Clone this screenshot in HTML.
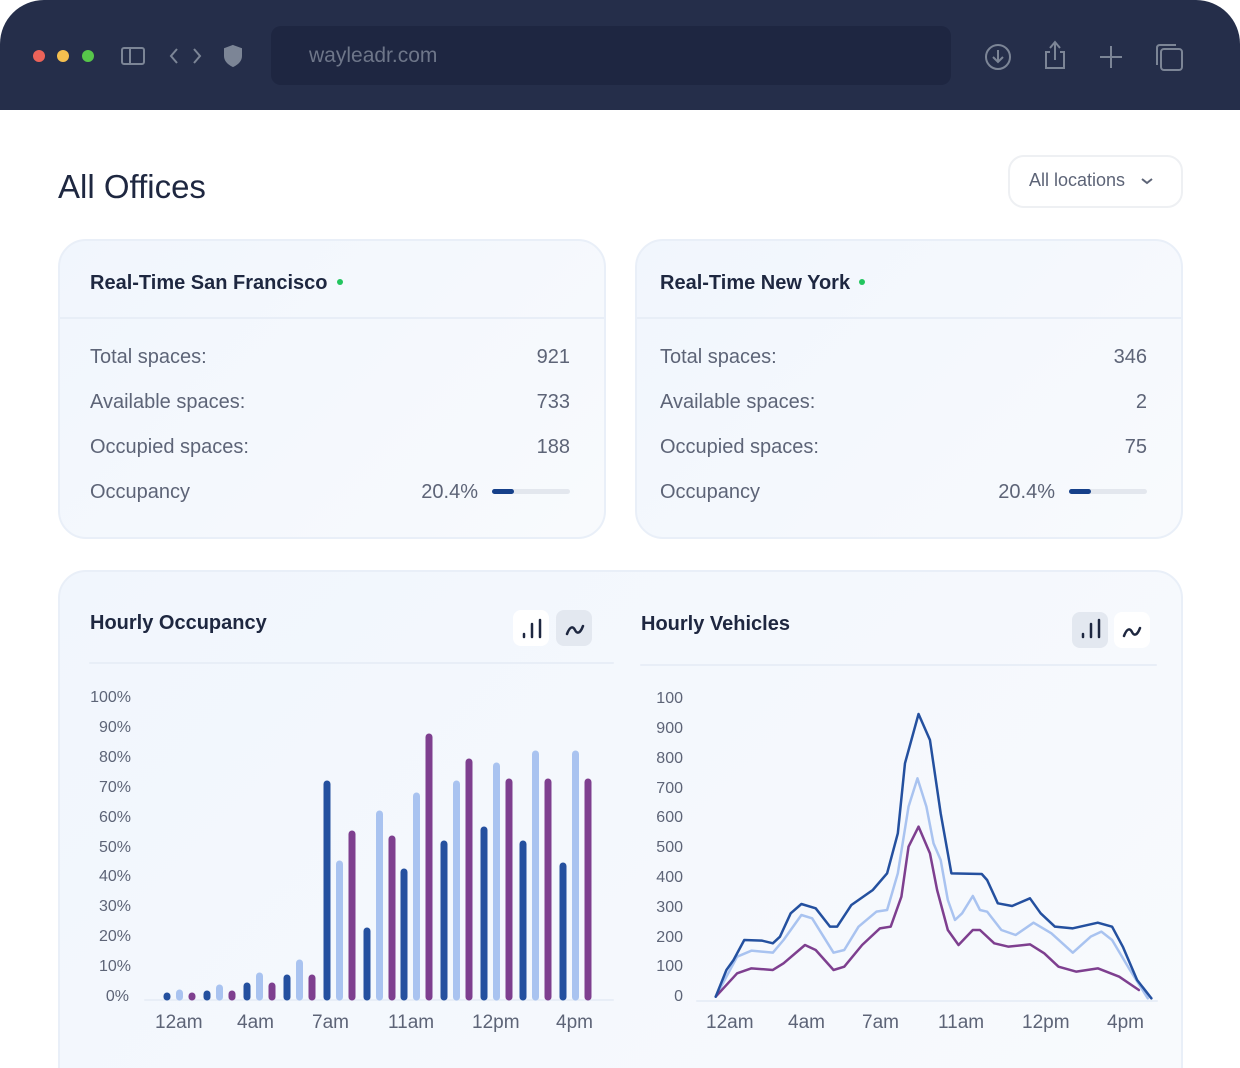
<!DOCTYPE html>
<html><head><meta charset="utf-8"><style>
*{box-sizing:border-box;margin:0;padding:0}
html,body{width:1240px;height:1068px;overflow:hidden}
body{background:#fff;font-family:"Liberation Sans",sans-serif;position:relative}
.bar{position:absolute;left:0;top:0;width:1240px;height:110px;background:#252e4a;border-radius:44px 44px 0 0}
.url{position:absolute;left:271px;top:26px;width:680px;height:59px;background:#1e2641;border-radius:10px;color:#6e7689;font-size:21px;padding:18px 0 0 38px}
.dot{position:absolute;top:50px;width:12px;height:12px;border-radius:50%}
.abs{position:absolute}
h1{position:absolute;left:58px;top:168px;font-size:33px;color:#1e2740;font-weight:500}
.sel{position:absolute;left:1008px;top:155px;width:175px;height:53px;border:2px solid #eef0f3;border-radius:16px;color:#5d6477;font-size:18px;padding:13px 0 0 19px}
.card{position:absolute;background:linear-gradient(135deg,#f1f6fd,#f8fafd);border:2px solid #e9eff8;border-radius:28px}
.ct{position:absolute;left:30px;font-size:20px;color:#1e2740;font-weight:bold}
.hr{position:absolute;left:0;right:0;height:2px;background:#e8eef7}
.row{position:absolute;left:30px;right:34px;font-size:20px;color:#5d6477}
.row span{position:absolute;right:0}
.g{display:inline-block;width:6px;height:6px;border-radius:50%;background:#22c55e;margin-left:9px;vertical-align:4px}
.prog{position:absolute;right:34px;width:78px;height:5px;background:#e3e7ee;border-radius:3px}
.prog i{position:absolute;left:0;top:0;width:22px;height:5px;background:#16408a;border-radius:3px}
.btn{position:absolute;width:36px;height:36px;border-radius:8px;background:#fff}
.btn.on{background:#e3e8f0}
.yl{position:absolute;font-size:16px;color:#5d6477;text-align:right;width:50px}
.xl{position:absolute;font-size:19px;color:#5d6477}
</style></head><body>
<div class="bar"></div>
<div class="dot" style="left:33px;background:#ec6359"></div>
<div class="dot" style="left:57px;background:#f5bf4f"></div>
<div class="dot" style="left:82px;background:#57c64a"></div>
<svg class="abs" style="left:115px;top:40px" width="140" height="32" fill="none" stroke="#7c8596" stroke-width="2">
<rect x="7" y="8" width="22" height="16" rx="2"/><line x1="15" y1="8" x2="15" y2="24"/>
<path d="M62 9l-6 7 6 7M79 9l6 7-6 7"/>
<path d="M118 6l8 3v7c0 5-4 8-8 10-4-2-8-5-8-10V9z" fill="#7c8596"/>
</svg>
<div class="url">wayleadr.com</div>
<svg class="abs" style="left:980px;top:38px" width="210" height="40" fill="none" stroke="#7c8596" stroke-width="2">
<circle cx="18" cy="19" r="12"/><path d="M18 12v12M13 19l5 5 5-5"/>
<path d="M70 10l5-6 5 6M75 4v18M70 14h-4v16h18V14h-4"/>
<path d="M131 8v22M120 19h22"/>
<rect x="181" y="11" width="21" height="21" rx="3"/><path d="M177 27V10c0-2 1-3 3-3h16"/>
</svg>
<h1>All Offices</h1>
<div class="sel">All locations <svg width="14" height="10" style="margin-left:10px"><path d="M2 3l5 4 5-4" stroke="#5d6477" stroke-width="2" fill="none"/></svg></div>

<div class="card" style="left:58px;top:239px;width:548px;height:300px">
<div class="ct" style="top:31px">Real-Time San Francisco<span class="g"></span></div>
<div class="hr" style="top:76px"></div>
<div class="row" style="top:105px">Total spaces:<span>921</span></div>
<div class="row" style="top:150px">Available spaces:<span>733</span></div>
<div class="row" style="top:195px">Occupied spaces:<span>188</span></div>
<div class="row" style="top:240px">Occupancy<span style="right:92px">20.4%</span></div>
<div class="prog" style="top:248px"><i></i></div>
</div>
<div class="card" style="left:635px;top:239px;width:548px;height:300px">
<div class="ct" style="top:31px;left:23px">Real-Time New York<span class="g"></span></div>
<div class="hr" style="top:76px"></div>
<div class="row" style="top:105px;left:23px">Total spaces:<span>346</span></div>
<div class="row" style="top:150px;left:23px">Available spaces:<span>2</span></div>
<div class="row" style="top:195px;left:23px">Occupied spaces:<span>75</span></div>
<div class="row" style="top:240px;left:23px">Occupancy<span style="right:92px">20.4%</span></div>
<div class="prog" style="top:248px"><i></i></div>
</div>

<div class="card" style="left:58px;top:570px;width:1125px;height:540px"></div>
<div class="ct" style="left:90px;top:612px;font-weight:600">Hourly Occupancy</div>
<div class="ct" style="left:641px;top:613px;font-weight:600">Hourly Vehicles</div>
<div class="btn" style="left:513px;top:610px"></div><div class="btn on" style="left:556px;top:610px"></div>
<div class="btn on" style="left:1072px;top:612px"></div><div class="btn" style="left:1114px;top:612px"></div>
<svg class="abs" style="left:0;top:0" width="1240" height="1068" fill="none" stroke-linecap="round">
<g stroke="#1e2740" stroke-width="2.5"><path d="M524 634v3M532 624v13M540 620v17M1083 634v3M1091 624v13M1099 620v17"/>
<path d="M567 634c3-8 6-8 8-4s5 4 8-4M1124 636c3-8 6-8 8-4s5 4 8-4"/></g>
<path d="M90 663h523M641 665h515" stroke="#e8eef7" stroke-width="2"/>
<path d="M145 1000h468M697 1001h460" stroke="#e8eef7" stroke-width="2"/>
<g stroke-width="7" id="bars"></g>
<g transform="translate(630,580) scale(0.3571,0.33333)" stroke-width="2.5" stroke-linejoin="round">
<polyline vector-effect="non-scaling-stroke" stroke="#a9c3f0" points="240,1250 300,1130 340,1112 400,1118 430,1080 480,1005 510,1015 570,1118 600,1110 640,1040 690,995 720,990 750,880 780,680 805,595 830,680 850,790 870,840 890,960 910,1020 930,1000 960,948 980,990 1000,995 1040,1050 1080,1065 1130,1028 1180,1060 1240,1118 1290,1070 1320,1055 1350,1080 1400,1170 1450,1255"/>
<polyline vector-effect="non-scaling-stroke" stroke="#7e3f8f" points="240,1250 300,1180 340,1165 400,1170 430,1150 490,1095 520,1110 570,1170 600,1160 650,1095 700,1045 730,1040 760,950 780,800 808,740 840,820 860,930 890,1050 920,1095 960,1050 980,1050 1020,1090 1060,1100 1120,1093 1160,1120 1200,1160 1250,1175 1310,1165 1370,1190 1425,1230"/>
<polyline vector-effect="non-scaling-stroke" stroke="#24509f" points="240,1250 270,1170 290,1140 320,1080 370,1082 400,1090 420,1070 450,1000 480,972 520,985 560,1040 580,1040 620,975 680,930 720,880 750,760 770,550 808,402 840,480 870,700 900,880 985,882 1000,900 1030,970 1070,978 1120,955 1150,1000 1190,1040 1240,1045 1310,1028 1350,1040 1380,1100 1420,1200 1460,1255"/>
</g>
</svg>
<script>
var v=[[993,990,993],[991,985,991],[983,973,983],[975,960,975],[781,861,831],[928,811,836],[869,793,734],[841,781,759],[827,763,779],[841,751,779],[863,751,779]];
var xs=[167,207,247,287,327,367,404,444,484,523,563],c=["#24509f","#a9c3f0","#7e3f8f"],s="";
v.forEach(function(g,i){g.forEach(function(t,j){var x=xs[i]+j*12.5;s+='<path stroke="'+c[j]+'" d="M'+x+' '+(t+3)+'V997"/>';});});
document.getElementById("bars").innerHTML=s;
</script>
<div class="yl" style="left:81px;top:689px">100%</div><div class="yl" style="left:81px;top:719px">90%</div><div class="yl" style="left:81px;top:749px">80%</div><div class="yl" style="left:81px;top:779px">70%</div><div class="yl" style="left:81px;top:809px">60%</div><div class="yl" style="left:81px;top:839px">50%</div><div class="yl" style="left:81px;top:868px">40%</div><div class="yl" style="left:81px;top:898px">30%</div><div class="yl" style="left:81px;top:928px">20%</div><div class="yl" style="left:81px;top:958px">10%</div><div class="yl" style="left:79px;top:988px">0%</div>
<div class="yl" style="left:633px;top:690px">100</div><div class="yl" style="left:633px;top:720px">900</div><div class="yl" style="left:633px;top:750px">800</div><div class="yl" style="left:633px;top:780px">700</div><div class="yl" style="left:633px;top:809px">600</div><div class="yl" style="left:633px;top:839px">500</div><div class="yl" style="left:633px;top:869px">400</div><div class="yl" style="left:633px;top:899px">300</div><div class="yl" style="left:633px;top:929px">200</div><div class="yl" style="left:633px;top:958px">100</div><div class="yl" style="left:633px;top:988px">0</div>
<div class="xl" style="left:155px;top:1012px">12am</div><div class="xl" style="left:237px;top:1012px">4am</div><div class="xl" style="left:312px;top:1012px">7am</div><div class="xl" style="left:388px;top:1012px">11am</div><div class="xl" style="left:472px;top:1012px">12pm</div><div class="xl" style="left:556px;top:1012px">4pm</div>
<div class="xl" style="left:706px;top:1012px">12am</div><div class="xl" style="left:788px;top:1012px">4am</div><div class="xl" style="left:862px;top:1012px">7am</div><div class="xl" style="left:938px;top:1012px">11am</div><div class="xl" style="left:1022px;top:1012px">12pm</div><div class="xl" style="left:1107px;top:1012px">4pm</div>
</body></html>
